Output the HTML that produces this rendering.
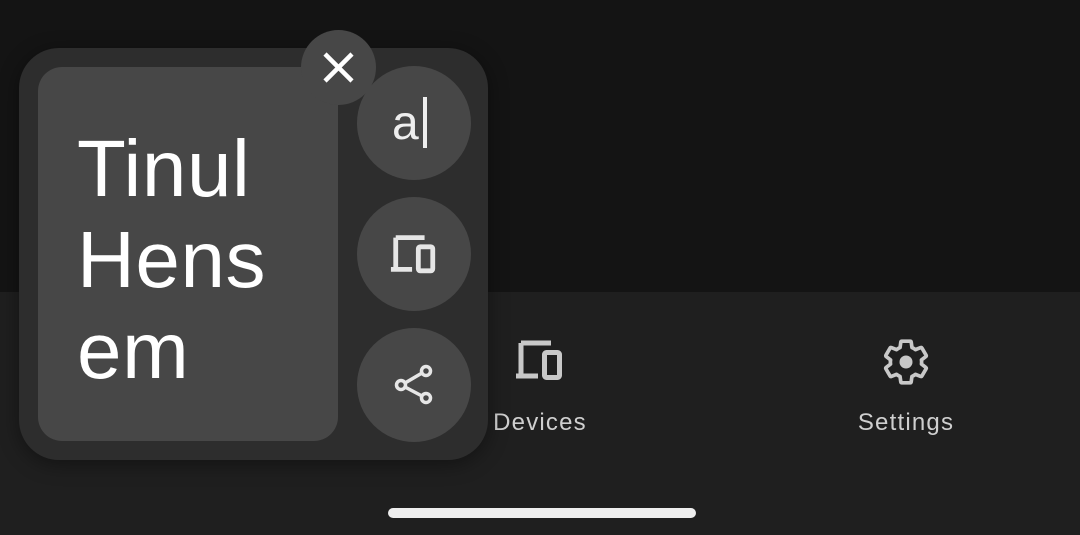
<!DOCTYPE html>
<html><head><style>
body{margin:0;width:1080px;height:535px;overflow:hidden;background:#1f1f1f;font-family:"Liberation Sans",sans-serif;position:relative}
.top{position:absolute;left:0;top:0;width:1080px;height:292px;background:#141414}
.lbl{position:absolute;color:#cfcfcf;font-size:24px;letter-spacing:1.2px;transform:translateX(-50%);top:409px}
.panel{position:absolute;left:19px;top:48px;width:469px;height:412px;border-radius:40px;background:#2d2d2d;box-shadow:0 4px 20px rgba(0,0,0,.4)}
.card{position:absolute;left:38px;top:67px;width:300px;height:374px;border-radius:24px;background:#474747}
.txt{position:absolute;left:77px;top:123px;color:#fff;font-size:80px;line-height:91px;letter-spacing:0.6px}
.btn{position:absolute;width:114px;height:114px;border-radius:50%;background:#474747;left:357px}
.close{position:absolute;left:301px;top:30px;width:75px;height:75px;border-radius:50%;background:#474747}
.home{position:absolute;left:388px;top:508px;width:308px;height:10px;border-radius:5px;background:#eee}
</style></head><body>
<div class="top"></div>
<svg style="position:absolute;left:514px;top:340px" width="52" height="40" viewBox="0 0 52 40"><path d="M7 3h30M7 3v31M2 36h22" stroke="#c8c8c8" stroke-width="5" fill="none"/><rect x="30.5" y="12.5" width="15" height="25" rx="2" fill="none" stroke="#c8c8c8" stroke-width="5"/></svg>
<div class="lbl" style="left:540px">Devices</div>
<svg style="position:absolute;left:880px;top:336px" width="52" height="52" viewBox="0 0 24 24"><path fill="none" stroke="#c8c8c8" stroke-width="1.7" stroke-linejoin="round" d="M19.14 12.94c.04-.3.06-.61.06-.94 0-.32-.02-.64-.07-.94l2.03-1.58a.49.49 0 0 0 .12-.61l-1.92-3.32a.488.488 0 0 0-.59-.22l-2.39.96c-.5-.38-1.03-.7-1.620-.94l-.36-2.54a.484.484 0 0 0-.48-.41h-3.84c-.24 0-.43.17-.47.41l-.36 2.54c-.59.24-1.130.57-1.62.94l-2.39-.96c-.22-.08-.47 0-.59.22L2.74 8.87c-.12.21-.08.47.12.61l2.03 1.58c-.05.3-.09.63-.09.94s.02.64.07.94l-2.03 1.58a.49.49 0 0 0-.12.61l1.92 3.32c.12.22.37.29.59.22l2.39-.96c.5.38 1.03.7 1.62.94l.36 2.54c.05.24.24.41.48.41h3.840c.24 0 .44-.17.47-.41l.36-2.54c.59-.24 1.13-.56 1.62-.94l2.39.96c.22.08.47 0 .59-.22l1.92-3.32c.12-.22.07-.47-.12-.61z"/><circle cx="12" cy="12" r="3" fill="#c8c8c8"/></svg>
<div class="lbl" style="left:906px">Settings</div>
<div class="panel"></div>
<div class="card"></div>
<div class="txt">Tinul<br>Hens<br>em</div>
<div class="btn" style="top:66px"><span style="position:absolute;left:35px;top:30px;color:#eee;font-size:48px">a</span><span style="position:absolute;left:66px;top:31px;width:4px;height:51px;background:#eee"></span></div>
<div class="btn" style="top:197px"><svg style="position:absolute;left:32px;top:37px" width="50" height="40" viewBox="0 0 52 40"><path d="M7 3h30M7 3v31M2 36h22" stroke="#e6e6e6" stroke-width="5" fill="none"/><rect x="30.5" y="12.5" width="15" height="25" rx="2" fill="none" stroke="#e6e6e6" stroke-width="5"/></svg></div>
<div class="btn" style="top:328px"><svg style="position:absolute;left:35px;top:35px" width="44" height="44" viewBox="0 0 44 44"><circle cx="34" cy="8" r="4.5" fill="none" stroke="#e6e6e6" stroke-width="3.5"/><circle cx="9" cy="22" r="4.5" fill="none" stroke="#e6e6e6" stroke-width="3.5"/><circle cx="34" cy="35" r="4.5" fill="none" stroke="#e6e6e6" stroke-width="3.5"/><path d="M13 20L30 10M13 24L30 33" stroke="#e6e6e6" stroke-width="3.5"/></svg></div>
<div class="close"><svg style="position:absolute;left:20px;top:20px" width="35" height="35" viewBox="0 0 35 35"><path d="M4 4L31 31M31 4L4 31" stroke="#fff" stroke-width="4.5"/></svg></div>
<div class="home"></div>
</body></html>
